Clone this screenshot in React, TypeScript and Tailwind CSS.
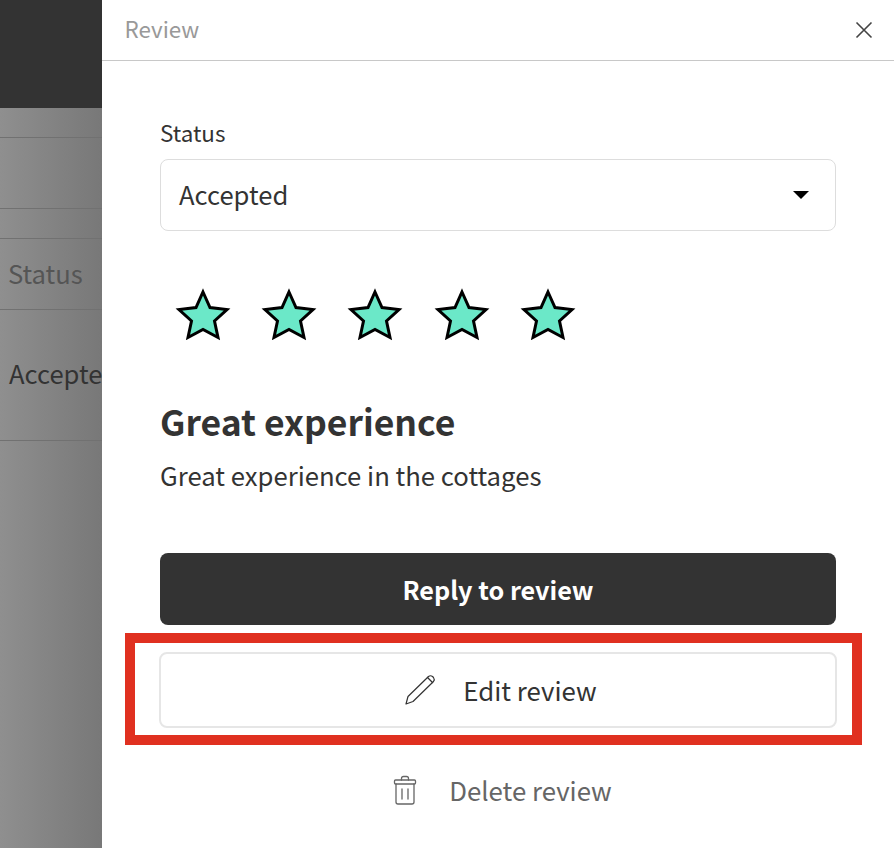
const font = { fontFamily: '"Noto Sans CJK SC", "Noto Sans", sans-serif' };

function Star() {
  return (
    <svg width="56" height="54" viewBox="0 0 56 54" className="shrink-0">
      <polygon
        points="28,4 35,19.5 52,21.5 39.5,33 43,49.5 28,41.5 13,49.5 16.5,33 4,21.5 21,19.5"
        fill="#6BE8C8"
        stroke="#000"
        strokeWidth="3"
        strokeLinejoin="miter"
      />
    </svg>
  );
}

function Pencil() {
  return (
    <svg width="32" height="32" viewBox="0 0 32 32" fill="none" stroke="#333" strokeWidth="1.2" strokeLinejoin="round" strokeLinecap="round">
      <path d="M2 30 L4 22.5 L24.5 2.5 Q26.5 1 28.5 2.5 L29.5 3.5 Q31 5.5 29.5 7.5 L9 27.5 Z" />
      <path d="M23.5 3.5 L28.5 8.5" />
    </svg>
  );
}

function Trash() {
  return (
    <svg width="24" height="30" viewBox="0 0 24 30" fill="none" stroke="#666" strokeWidth="1.3" strokeLinejoin="round" strokeLinecap="round">
      <rect x="1.5" y="5" width="21" height="4" rx="1" />
      <path d="M8.5 5 V3.5 Q8.5 1.5 10.5 1.5 H13.5 Q15.5 1.5 15.5 3.5 V5" />
      <path d="M3 9 V27 Q3 29 5 29 H19 Q21 29 21 27 V9" />
      <path d="M9 14 V24 M15 14 V24" />
    </svg>
  );
}

export default function App() {
  return (
    <div style={font} className="flex h-[848px] w-[894px] overflow-hidden bg-white text-[#333]">
      <div className="flex w-[102px] shrink-0 flex-col bg-gradient-to-r from-[#8f8f8f] to-[#787878]">
        <div className="h-[108px] shrink-0 bg-[#333]" />
        <div className="h-[30px] shrink-0 border-b border-[#717171]" />
        <div className="h-[71px] shrink-0 border-b border-[#717171]" />
        <div className="h-[30px] shrink-0 border-b border-[#717171]" />
        <div className="flex h-[71px] shrink-0 items-center overflow-hidden border-b border-[#717171] pl-[8px]">
          <span className="pb-[2px] text-[25.6px] leading-[36px] text-[#555]">Status</span>
        </div>
        <div className="flex h-[131px] shrink-0 items-center overflow-hidden border-b border-[#717171] pl-[9px]">
          <span className="pb-[4px] whitespace-nowrap text-[25.6px] leading-[36px] text-[#333]">Accepted</span>
        </div>
      </div>
      <div className="flex min-w-0 flex-1 flex-col">
        <div className="flex h-[61px] shrink-0 items-center justify-between border-b border-[#c8c8c8] pl-[22.5px] pr-[21px]">
          <span className="pb-[4px] text-[22.4px] leading-[32px] text-[#999]">Review</span>
          <svg width="18" height="18" viewBox="0 0 18 18" stroke="#444" strokeWidth="1.6" fill="none">
            <path d="M1.5 1.5 L16.5 16.5 M16.5 1.5 L1.5 16.5" />
          </svg>
        </div>
        <div className="flex flex-col px-[58px] pt-[55px]">
          <div className="text-[22.4px] leading-[32px]">Status</div>
          <div className="mt-[11px] flex h-[72px] items-center justify-between rounded-lg border border-[#ddd] pl-[18px] pr-[26px]">
            <span className="pb-[2px] text-[25.6px] leading-[36px]">Accepted</span>
            <span className="h-0 w-0 border-x-[8px] border-t-[8px] border-x-transparent border-t-black" />
          </div>
          <div className="mt-[57px] flex gap-[30.2px] pl-[15px]">
            <Star /><Star /><Star /><Star /><Star />
          </div>
          <h2 className="mt-[53px] text-[35.5px] font-bold leading-[52px]">Great experience</h2>
          <p className="mt-[10px] text-[25.7px] leading-[36px]">Great experience in the cottages</p>
          <button className="mt-[60px] flex h-[72px] items-center justify-center rounded-lg bg-[#333] pt-[2px] text-[25.2px] font-bold text-white">
            Reply to review
          </button>
          <div className="relative mt-[27px]">
            <button className="mx-[-1px] flex h-[76px] w-[678px] items-center justify-center gap-[27px] rounded-lg border-2 border-[#e6e6e6] bg-white pl-[5px] text-[25.8px]">
              <Pencil />
              <span>Edit review</span>
            </button>
            <div className="pointer-events-none absolute bottom-[-17px] left-[-35px] right-[-26px] top-[-19px] border-[10px] border-[#e03020]" />
          </div>
          <div className="mt-[44px] flex items-center justify-center gap-[32px] pl-[9px] text-[25.8px] leading-[36px] text-[#666]">
            <Trash />
            <span>Delete review</span>
          </div>
        </div>
      </div>
    </div>
  );
}
